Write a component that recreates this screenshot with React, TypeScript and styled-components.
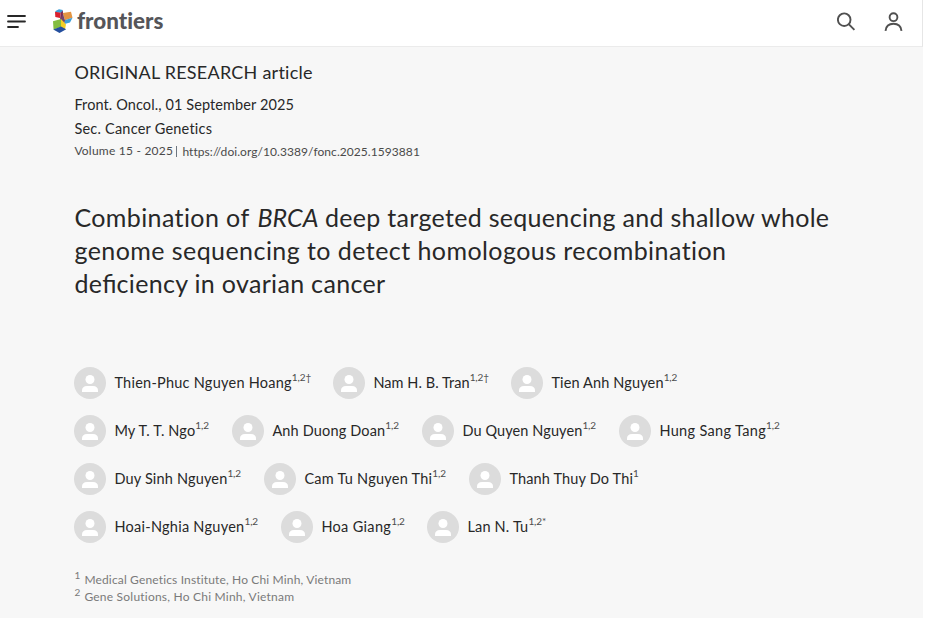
import React from "react";
import styled, { createGlobalStyle } from "styled-components";

const GlobalStyle = createGlobalStyle`
  * { box-sizing: border-box; }
  body { margin: 0; background: #fff; overflow: hidden; font-family: Lato, sans-serif; color: #282828; }
`;

const Page = styled.div`
  width: 923px;
  height: 618px;
  display: flex;
  flex-direction: column;
  background: #f7f7f7;
`;

const Header = styled.header`
  height: 47px;
  flex: none;
  display: flex;
  align-items: center;
  padding: 0 19px 4px 7px;
  background: #fff;
  border-right: 1px solid #e6e6e6;
  border-bottom: 1px solid #ebebeb;
`;

const Logo = styled.div`
  display: flex;
  align-items: center;
  gap: 4px;
  margin-left: 27px;
`;

const Wordmark = styled.span`
  font-size: 22.4px;
  line-height: 26px;
  font-weight: 900;
  color: #555559;
  font-variant-ligatures: none;
`;

const Actions = styled.div`
  display: flex;
  gap: 28px;
  margin-left: auto;
  padding-top: 1px;
`;

const Article = styled.main`
  padding: 12px 74px 0 74.400px;
`;

const Line = styled.div<{ $size: number; $height: number; $spacing: number }>`
  font-size: ${(p) => p.$size}px;
  line-height: ${(p) => p.$height}px;
  letter-spacing: ${(p) => p.$spacing}px;
  white-space: nowrap;
`;

const Kicker = styled(Line)`
  margin-bottom: 8px;
`;

const Meta = styled.div`
  display: flex;
  height: 20px;
  font-size: 12px;
  line-height: 20px;
  color: #4a4a4a;
  white-space: nowrap;
`;

const Volume = styled.span`
  letter-spacing: 0.22px;
  width: 102px;
`;

const Divider = styled.span`
  width: 1px;
  height: 11px;
  margin: 5px 5px 0 0;
  background: #6d7680;
`;

const Doi = styled.span`
  padding-top: 1px;
  letter-spacing: 0.06px;
`;

const Title = styled.h1`
  margin: 40px 0 0;
  font-size: 25px;
  font-weight: 400;
  line-height: 33px;
  white-space: nowrap;
`;

const TitleLine = styled.div`
  display: flex;
`;

const Run = styled.span<{ $spacing: number; $width?: number }>`
  letter-spacing: ${(p) => p.$spacing}px;
  ${(p) => p.$width && `width: ${p.$width}px;`}
`;

const Gene = styled(Run)`
  font-style: italic;
`;

const Ligature = styled.span`
  letter-spacing: 0;
`;

const Authors = styled.div`
  margin-top: 67px;
  display: flex;
  flex-direction: column;
  gap: 16px;
`;

const AuthorRow = styled.div`
  display: flex;
  gap: 24px;
`;

const Author = styled.div<{ $width?: number }>`
  display: flex;
  align-items: center;
  height: 32px;
  gap: 8px;
  white-space: nowrap;
  ${(p) => p.$width && `width: ${p.$width}px;`}
`;

const AvatarIcon = styled.svg`
  flex: none;
`;

const AuthorName = styled.span<{ $spacing: number }>`
  font-size: 14.5px;
  line-height: 24px;
  letter-spacing: ${(p) => p.$spacing}px;
`;

const Mark = styled.sup`
  font-size: 10px;
  line-height: 0;
  vertical-align: 7px;
  letter-spacing: -0.1px;
  color: #4c4c4c;
`;

const Affiliations = styled.div`
  margin-top: 28px;
`;

const Affiliation = styled.div<{ $spacing: number }>`
  display: flex;
  height: 17px;
  font-size: 12px;
  line-height: 17px;
  letter-spacing: ${(p) => p.$spacing}px;
  color: #7a7a7a;
  white-space: nowrap;
`;

const AffiliationNumber = styled.span`
  width: 10px;
  margin-top: -4px;
  font-size: 10px;
`;

const MenuIcon = () => (
  <svg width="19" height="14" viewBox="0 0 19 14" stroke="#282828" strokeWidth="1.8" strokeLinecap="round">
    <path d="M1 2h17M1 7.5h17M1 13h10" />
  </svg>
);

const LogoMark = () => (
  <svg width="20" height="24" viewBox="0 0 20 24">
    <path d="M2.500 2 6 .3 9.800 1 9.300 4 2.500 3.500z" fill="#3c9ed8" />
    <path d="M2 2.800 7.800 3.800 7 9 2.300 8z" fill="#d9202e" />
    <path d="M7.800 3.800 9.800 1.500 10.500 9l-3.500 1z" fill="#7d2a54" />
    <path d="m9.700 4 8.300-1.300 1.500 6-7.500 2.500z" fill="#e39543" />
    <path d="m11.500 11.200 8-2.500L17 13.500l-5.500 1.500z" fill="#3c9ed8" />
    <path d="m7.500 10 2.400-5 2.100 6.200-.8 4-4-3.700z" fill="#72446c" />
    <path d="m0 12.200 8-2.200v8L.5 20.500z" fill="#84bd41" />
    <path d="m8 10 5 5.500-1 5L8 18.500z" fill="#f3cf27" />
    <path d="m.3 20.500 7.700-3 5.200 2.800L6.500 24z" fill="#244f9e" />
  </svg>
);

const SearchIcon = () => (
  <svg width="19" height="20" viewBox="0 0 19 20" fill="none" stroke="#505050" strokeWidth="1.9">
    <circle cx="7.200" cy="7.700" r="6.300" />
    <path d="m11.700 12.200 5.700 5.700" />
  </svg>
);

const UserIcon = () => (
  <svg width="19" height="20" viewBox="0 0 19 20" fill="none" stroke="#505050" strokeWidth="1.9">
    <circle cx="9.500" cy="5.200" r="3.900" />
    <path d="M1.500 18.800c.5-4.400 3.700-7 8-7s7.500 2.600 8 7" />
  </svg>
);

const Avatar = () => (
  <AvatarIcon width="32" height="32" viewBox="0 0 32 32">
    <circle cx="16" cy="16" r="16" fill="#dcdcdc" />
    <circle cx="16" cy="12.500" r="4.500" fill="#fff" />
    <path d="M8 25v-1.500c0-3 2-4.500 5-4.500h6c3 0 5 1.500 5 4.500V25z" fill="#fff" />
  </AvatarIcon>
);

type AuthorInfo = { name: string; mark: string; spacing: number; width?: number };

const authorRows: AuthorInfo[][] = [
  [
    { name: "Thien-Phuc Nguyen Hoang", mark: "1,2†", spacing: 0.25, width: 235 },
    { name: "Nam H. B. Tran", mark: "1,2†", spacing: 0.06, width: 154 },
    { name: "Tien Anh Nguyen", mark: "1,2", spacing: 0.14 },
  ],
  [
    { name: "My T. T. Ngo", mark: "1,2", spacing: 0.15, width: 134 },
    { name: "Anh Duong Doan", mark: "1,2", spacing: 0.16, width: 166 },
    { name: "Du Quyen Nguyen", mark: "1,2", spacing: 0.1, width: 173 },
    { name: "Hung Sang Tang", mark: "1,2", spacing: 0.33 },
  ],
  [
    { name: "Duy Sinh Nguyen", mark: "1,2", spacing: 0.17, width: 166 },
    { name: "Cam Tu Nguyen Thi", mark: "1,2", spacing: 0.25, width: 181 },
    { name: "Thanh Thuy Do Thi", mark: "1", spacing: 0.15 },
  ],
  [
    { name: "Hoai-Nghia Nguyen", mark: "1,2", spacing: 0.27, width: 183 },
    { name: "Hoa Giang", mark: "1,2", spacing: 0.33, width: 122 },
    { name: "Lan N. Tu", mark: "1,2*", spacing: 0.18 },
  ],
];

export default function App() {
  return (
    <>
      <GlobalStyle />
      <Page>
        <Header>
          <MenuIcon />
          <Logo>
            <LogoMark />
            <Wordmark>frontiers</Wordmark>
          </Logo>
          <Actions>
            <SearchIcon />
            <UserIcon />
          </Actions>
        </Header>
        <Article>
          <Kicker $size={18} $height={26} $spacing={0.24}>ORIGINAL RESEARCH article</Kicker>
          <Line $size={14.5} $height={24} $spacing={0.1}>Front. Oncol., 01 September 2025</Line>
          <Line $size={14.5} $height={24} $spacing={0.22}>Sec. Cancer Genetics</Line>
          <Meta>
            <Volume>Volume 15 - 2025</Volume>
            <Divider />
            <Doi>https://doi.org/10.3389/fonc.2025.1593881</Doi>
          </Meta>
          <Title>
            <TitleLine>
              <Run $spacing={0.4} $width={183}>Combination of</Run>
              <Gene $spacing={0.1} $width={67.5}>BRCA</Gene>
              <Run $spacing={0.31}>deep targeted sequencing and shallow whole</Run>
            </TitleLine>
            <TitleLine>
              <Run $spacing={0.44}>genome sequencing to detect homologous recombination</Run>
            </TitleLine>
            <TitleLine>
              <Run $spacing={0.32}>de<Ligature>fi</Ligature>ciency in ovarian cancer</Run>
            </TitleLine>
          </Title>
          <Authors>
            {authorRows.map((row, i) => (
              <AuthorRow key={i}>
                {row.map((a) => (
                  <Author key={a.name} $width={a.width}>
                    <Avatar />
                    <AuthorName $spacing={a.spacing}>
                      {a.name}
                      <Mark>{a.mark}</Mark>
                    </AuthorName>
                  </Author>
                ))}
              </AuthorRow>
            ))}
          </Authors>
          <Affiliations>
            <Affiliation $spacing={0.15}>
              <AffiliationNumber>1</AffiliationNumber>
              Medical Genetics Institute, Ho Chi Minh, Vietnam
            </Affiliation>
            <Affiliation $spacing={0.22}>
              <AffiliationNumber>2</AffiliationNumber>
              Gene Solutions, Ho Chi Minh, Vietnam
            </Affiliation>
          </Affiliations>
        </Article>
      </Page>
    </>
  );
}
